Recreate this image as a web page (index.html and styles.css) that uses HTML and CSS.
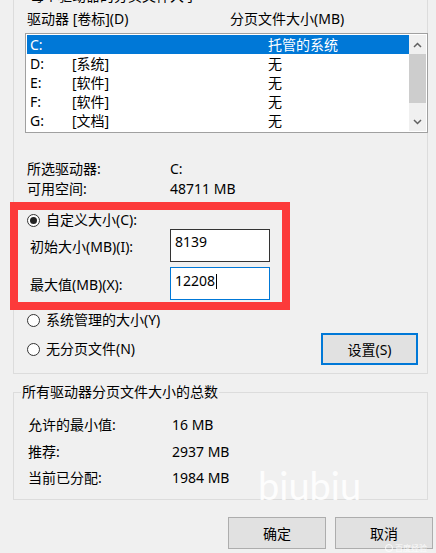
FILE: index.html
```html
<!DOCTYPE html>
<html lang="zh-CN">
<head>
<meta charset="utf-8">
<title>虚拟内存</title>
<link rel="stylesheet" href="styles.css">
</head>
<body>
<div class="group1">
  <div class="cut-title">每个驱动器的分页文件大小</div>
  <div class="list-head"><span>驱动器 [卷标](D)</span><span>分页文件大小(MB)</span></div>
  <div class="listbox">
    <div class="rows">
      <div class="row selected"><span>C:</span><span></span><span>托管的系统</span></div>
      <div class="row"><span>D:</span><span>[系统]</span><span>无</span></div>
      <div class="row"><span>E:</span><span>[软件]</span><span>无</span></div>
      <div class="row"><span>F:</span><span>[软件]</span><span>无</span></div>
      <div class="row"><span>G:</span><span>[文档]</span><span>无</span></div>
    </div>
    <div class="scrollbar">
      <div class="sb-btn"><svg width="9" height="6" viewBox="0 0 9 6"><path d="M1 5 L4.5 1.5 L8 5" fill="none" stroke="#606060" stroke-width="1.5"/></svg></div>
      <div class="sb-track"><div class="sb-thumb"></div></div>
      <div class="sb-btn"><svg width="9" height="6" viewBox="0 0 9 6"><path d="M1 1 L4.5 4.5 L8 1" fill="none" stroke="#606060" stroke-width="1.5"/></svg></div>
    </div>
  </div>
  <div class="info">
    <div class="info-row"><span>所选驱动器:</span><span>C:</span></div>
    <div class="info-row"><span>可用空间:</span><span>48711 MB</span></div>
  </div>
  <div class="highlight">
    <div class="radio-row"><span class="radio checked"></span><span>自定义大小(C):</span></div>
    <div class="field-row"><span class="field-label">初始大小(MB)(I):</span><div class="input">8139</div></div>
    <div class="field-row second"><span class="field-label">最大值(MB)(X):</span><div class="input focused">12208<span class="caret"></span></div></div>
  </div>
  <div class="radio-row r2"><span class="radio"></span><span>系统管理的大小(Y)</span></div>
  <div class="r3row">
    <div class="radio-row"><span class="radio"></span><span>无分页文件(N)</span></div>
    <button class="btn primary">设置(S)</button>
  </div>
</div>
<fieldset class="group2">
  <legend>所有驱动器分页文件大小的总数</legend>
  <div class="totals">
    <div class="trow"><span>允许的最小值:</span><span>16 MB</span></div>
    <div class="trow"><span>推荐:</span><span>2937 MB</span></div>
    <div class="trow"><span>当前已分配:</span><span>1984 MB</span></div>
  </div>
</fieldset>
<div class="actions">
  <button class="btn wide">确定</button>
  <button class="btn wide">取消</button>
</div>
<div class="watermark">biubiu</div>
<div class="corner-mark"><span class="cm-logo"></span>百度经验</div>
</body>
</html>
```
FILE: styles.css
```css
* { box-sizing: border-box; }
html, body { margin: 0; }
body {
  background: #f0f0f0;
  font-family: "Noto Sans", "Noto Sans CJK SC", sans-serif;
  font-size: 14px;
  color: #000;
  width: 436px;
  height: 553px;
  overflow: hidden;
  position: relative;
}
.group1 {
  margin: -13px 0 0 13px;
  width: 415px;
  border: 1px solid #dcdcdc;
  border-top: none;
  padding: 0 0 8px 0;
}
.cut-title { line-height: 18px; margin-left: 16px; }
.list-head {
  display: grid;
  grid-template-columns: 203px 1fr;
  margin: 5px 0 0 13px;
  line-height: 18px;
}
.listbox {
  margin: 5px 0 0 11px;
  width: 403px;
  height: 100px;
  border: 1px solid #a0a0a0;
  background: #fff;
  padding: 1px;
  display: flex;
}
.rows { flex: 1; }
.row {
  display: grid;
  grid-template-columns: 42px 196px 1fr;
  padding-left: 3px;
  height: 19px;
  line-height: 19px;
}
.row.selected { background: #0078d7; color: #fff; }
.scrollbar { width: 17px; display: flex; flex-direction: column; background: #f0f0f0; }
.sb-btn { height: 19px; display: flex; align-items: center; justify-content: center; }
.sb-btn svg { display: block; }
.sb-track { flex: 1; }
.sb-thumb { height: 49px; background: #cdcdcd; }
.info { margin: 26px 0 0 13px; line-height: 20px; }
.info-row { display: grid; grid-template-columns: 143px 1fr; }
.highlight {
  margin: 3px 0 0 -4px;
  width: 280px;
  border: 8px solid #fc3a3a;
  padding: 1px 0 2px 0;
}
.radio-row { display: flex; align-items: center; gap: 6px; line-height: 18px; height: 18px; }
.highlight .radio-row { padding-left: 9px; }
.radio {
  width: 13px;
  height: 13px;
  border-radius: 50%;
  border: 1px solid #333;
  background: #fff;
  display: flex;
  align-items: center;
  justify-content: center;
  flex: none;
}
.radio.checked::after {
  content: "";
  width: 7px;
  height: 7px;
  border-radius: 50%;
  background: #222;
}
.field-row {
  display: grid;
  grid-template-columns: 140px 100px;
  padding-left: 12px;
  align-items: center;
}
.field-row.second { margin-top: 5px; }
.field-label { line-height: 18px; padding-top: 3px; }
.input {
  height: 33px;
  border: 1px solid #333;
  background: #fff;
  padding: 3px 0 0 4px;
  line-height: 18px;
}
.input.focused { border-color: #0078d7; padding-top: 4px; }
.caret {
  display: inline-block;
  width: 1px;
  height: 15px;
  background: #000;
  vertical-align: -3px;
  margin-left: 1px;
}
.r2 { margin-top: 1px; padding-left: 13px; }
.r3row {
  margin-top: 4px;
  display: flex;
  align-items: center;
  justify-content: space-between;
  padding: 0 9px 0 13px;
  height: 32px;
}
.btn {
  font: inherit;
  width: 97px;
  height: 32px;
  background: #e1e1e1;
  border: 1px solid #adadad;
  color: #000;
  padding: 0;
}
.btn.primary { border: 2px solid #0078d7; }
.btn.wide { width: 98px; }
.group2 {
  margin: 9px 0 0 13px;
  width: 415px;
  border: 1px solid #dcdcdc;
  padding: 11px 0 7px 0;
  min-width: 0;
}
.group2 legend { margin-left: 7px; padding: 0 1px; line-height: 18px; }
.totals { padding-left: 14px; }
.trow { display: grid; grid-template-columns: 144px 1fr; line-height: 26.5px; }
.actions {
  display: flex;
  justify-content: flex-end;
  gap: 9px;
  margin-top: 17px;
  padding-right: 3px;
}
.watermark {
  position: absolute;
  left: 258px;
  top: 466px;
  font-family: Lato, sans-serif;
  font-size: 38px;
  line-height: 38px;
  color: rgba(255, 255, 255, 0.9);
}
.corner-mark {
  position: absolute;
  left: 385px;
  top: 543px;
  font-size: 8px;
  line-height: 10px;
  color: rgba(255, 255, 255, 0.85);
  display: flex;
  align-items: center;
  gap: 2px;
}
.cm-logo {
  width: 8px;
  height: 8px;
  border-radius: 50%;
  border: 1.5px solid rgba(255, 255, 255, 0.85);
}
```
